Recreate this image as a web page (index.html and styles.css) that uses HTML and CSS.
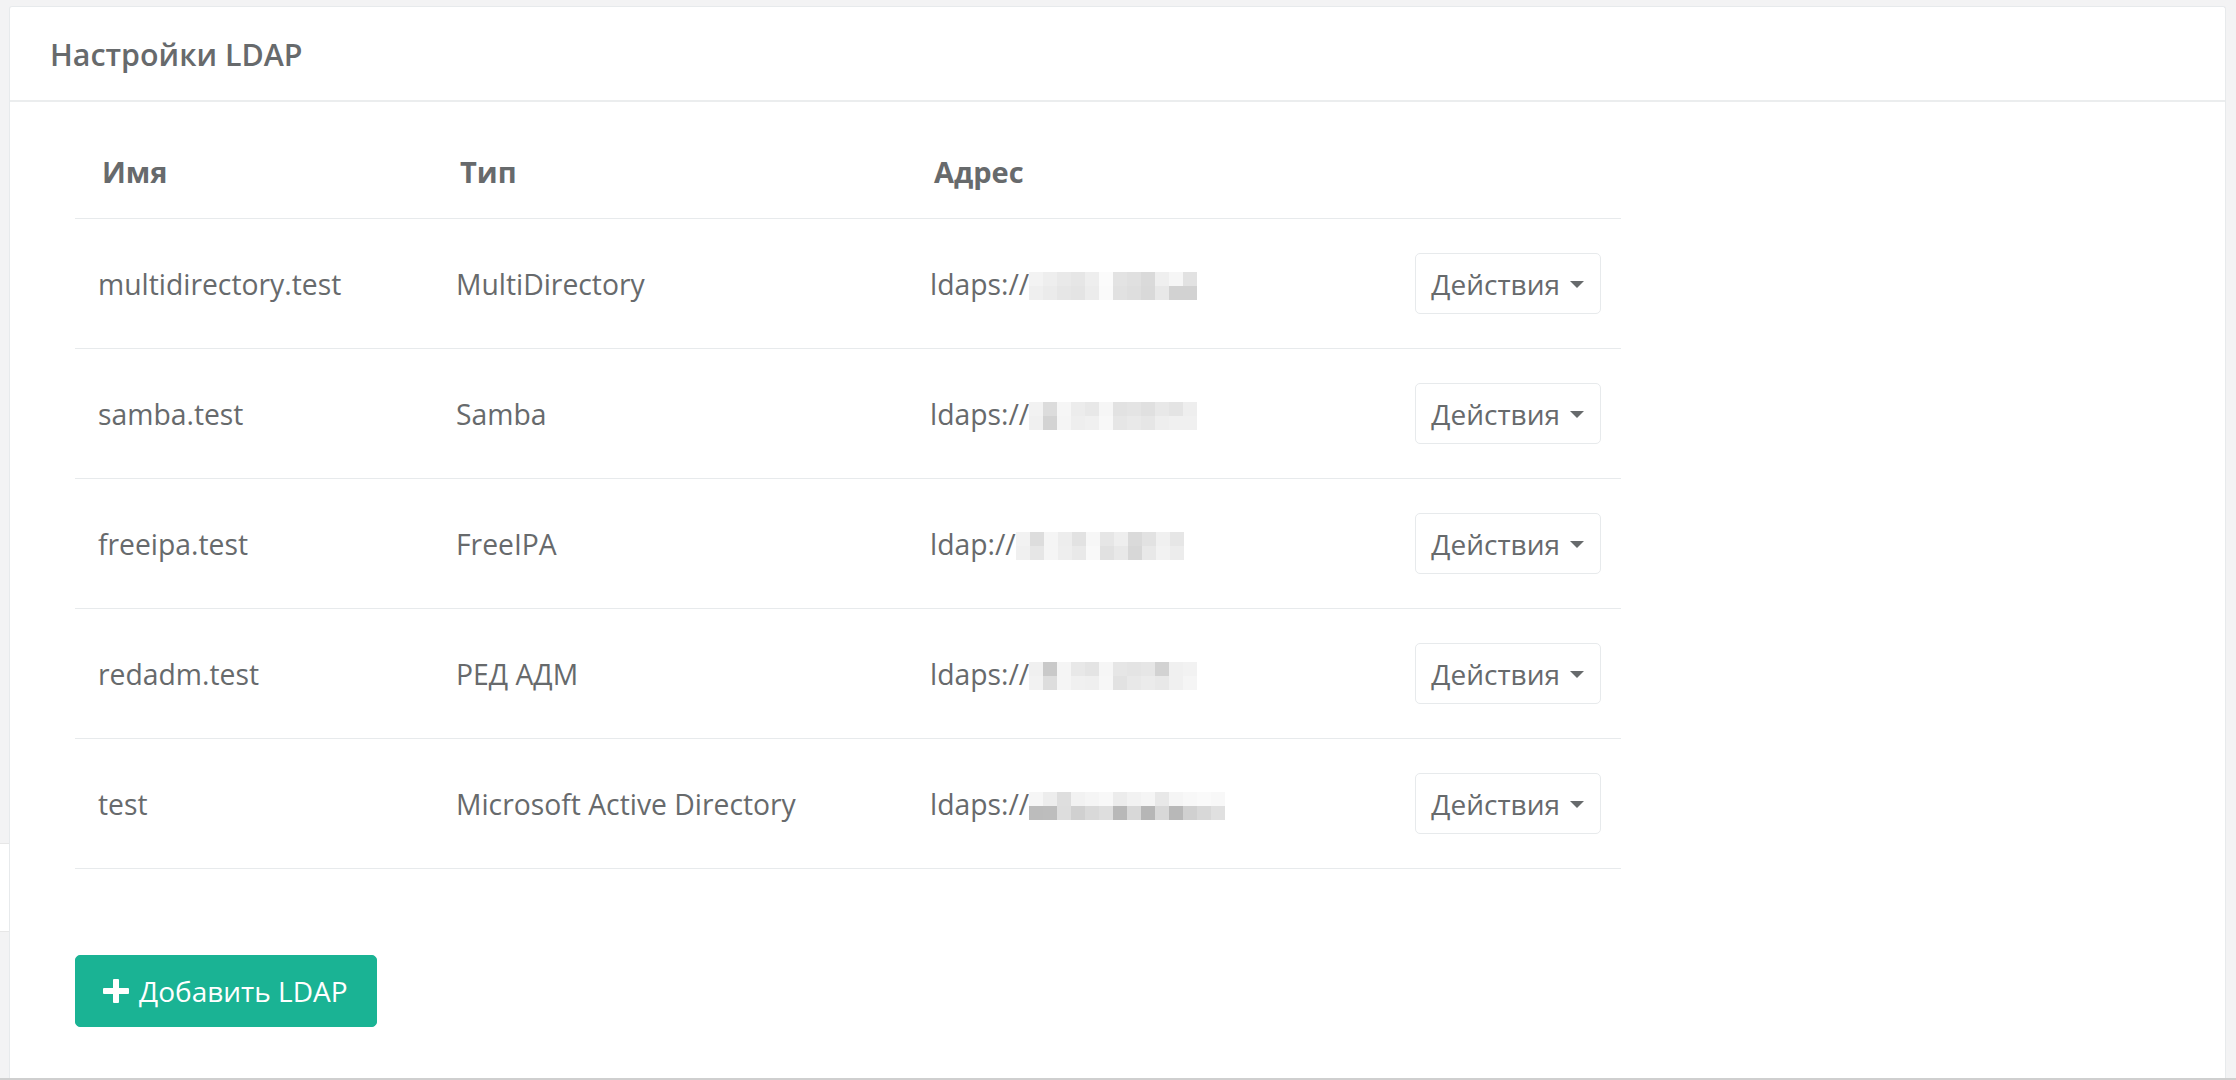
FILE: index.html
```html
<!DOCTYPE html>
<html lang="ru">
<head>
<meta charset="utf-8">
<title>Настройки LDAP</title>
<link rel="stylesheet" href="styles.css">
</head>
<body>
<div class="page">
  <div class="side"><div class="side-block"></div></div>
  <section class="ibox">
    <div class="ibox-title"><h5>Настройки LDAP</h5></div>
    <div class="ibox-content">
      <div class="ldap-table">
        <div class="trow thead">
          <div class="th">Имя</div>
          <div class="th">Тип</div>
          <div class="th">Адрес</div>
          <div class="th"></div>
        </div>

        <div class="trow">
          <div class="td">multidirectory.test</div>
          <div class="td">MultiDirectory</div>
          <div class="td addr">ldaps://<svg class="blur" width="168" height="28" viewBox="0 0 168 28" shape-rendering="crispEdges">
            <rect x="0" y="0" width="14" height="14" fill="#f3f3f3"/><rect x="0" y="14" width="14" height="14" fill="#efefef"/>
            <rect x="14" y="0" width="14" height="14" fill="#eeeeee"/><rect x="14" y="14" width="14" height="14" fill="#ebebeb"/>
            <rect x="28" y="0" width="14" height="14" fill="#e9e9e9"/><rect x="28" y="14" width="14" height="14" fill="#e6e6e6"/>
            <rect x="42" y="0" width="14" height="14" fill="#e6e6e6"/><rect x="42" y="14" width="14" height="14" fill="#e4e4e4"/>
            <rect x="56" y="0" width="14" height="14" fill="#eeeeee"/><rect x="56" y="14" width="14" height="14" fill="#ececec"/>
            <rect x="70" y="0" width="14" height="14" fill="#fbfbfb"/><rect x="70" y="14" width="14" height="14" fill="#fafafa"/>
            <rect x="84" y="0" width="14" height="14" fill="#e3e3e3"/><rect x="84" y="14" width="14" height="14" fill="#e1e1e1"/>
            <rect x="98" y="0" width="14" height="14" fill="#e0e0e0"/><rect x="98" y="14" width="14" height="14" fill="#dedede"/>
            <rect x="112" y="0" width="14" height="14" fill="#dadada"/><rect x="112" y="14" width="14" height="14" fill="#d9d9d9"/>
            <rect x="126" y="0" width="14" height="14" fill="#efefef"/><rect x="126" y="14" width="14" height="14" fill="#e8e8e8"/>
            <rect x="140" y="0" width="14" height="14" fill="#f6f6f6"/><rect x="140" y="14" width="14" height="14" fill="#d2d2d2"/>
            <rect x="154" y="0" width="14" height="14" fill="#e2e2e2"/><rect x="154" y="14" width="14" height="14" fill="#d2d2d2"/>
          </svg></div>
          <div class="td act"><button class="btn-actions" type="button">Действия<span class="caret"></span></button></div>
        </div>

        <div class="trow">
          <div class="td">samba.test</div>
          <div class="td">Samba</div>
          <div class="td addr">ldaps://<svg class="blur" width="168" height="28" viewBox="0 0 168 28" shape-rendering="crispEdges">
            <rect x="0" y="0" width="14" height="14" fill="#f2f2f2"/><rect x="0" y="14" width="14" height="14" fill="#f0f0f0"/>
            <rect x="14" y="0" width="14" height="14" fill="#dcdcdc"/><rect x="14" y="14" width="14" height="14" fill="#d3d3d3"/>
            <rect x="28" y="0" width="14" height="14" fill="#f6f6f6"/><rect x="28" y="14" width="14" height="14" fill="#f5f5f5"/>
            <rect x="42" y="0" width="14" height="14" fill="#ececec"/><rect x="42" y="14" width="14" height="14" fill="#eeeeee"/>
            <rect x="56" y="0" width="14" height="14" fill="#e8e8e8"/><rect x="56" y="14" width="14" height="14" fill="#f0f0f0"/>
            <rect x="70" y="0" width="14" height="14" fill="#f6f6f6"/><rect x="70" y="14" width="14" height="14" fill="#f8f8f8"/>
            <rect x="84" y="0" width="14" height="14" fill="#e2e2e2"/><rect x="84" y="14" width="14" height="14" fill="#e6e6e6"/>
            <rect x="98" y="0" width="14" height="14" fill="#e4e4e4"/><rect x="98" y="14" width="14" height="14" fill="#e9e9e9"/>
            <rect x="112" y="0" width="14" height="14" fill="#e0e0e0"/><rect x="112" y="14" width="14" height="14" fill="#e6e6e6"/>
            <rect x="126" y="0" width="14" height="14" fill="#e8e8e8"/><rect x="126" y="14" width="14" height="14" fill="#eeeeee"/>
            <rect x="140" y="0" width="14" height="14" fill="#e4e4e4"/><rect x="140" y="14" width="14" height="14" fill="#f0f0f0"/>
            <rect x="154" y="0" width="14" height="14" fill="#eeeeee"/><rect x="154" y="14" width="14" height="14" fill="#f0f0f0"/>
          </svg></div>
          <div class="td act"><button class="btn-actions" type="button">Действия<span class="caret"></span></button></div>
        </div>

        <div class="trow">
          <div class="td">freeipa.test</div>
          <div class="td">FreeIPA</div>
          <div class="td addr">ldap://<svg class="blur" width="168" height="28" viewBox="0 0 168 28" shape-rendering="crispEdges">
            <rect x="0" y="0" width="14" height="14" fill="#f2f2f2"/><rect x="0" y="14" width="14" height="14" fill="#f0f0f0"/>
            <rect x="14" y="0" width="14" height="14" fill="#dddddd"/><rect x="14" y="14" width="14" height="14" fill="#e6e6e6"/>
            <rect x="28" y="0" width="14" height="14" fill="#f5f5f5"/><rect x="28" y="14" width="14" height="14" fill="#f5f5f5"/>
            <rect x="42" y="0" width="14" height="14" fill="#ededed"/><rect x="42" y="14" width="14" height="14" fill="#eeeeee"/>
            <rect x="56" y="0" width="14" height="14" fill="#e2e2e2"/><rect x="56" y="14" width="14" height="14" fill="#e9e9e9"/>
            <rect x="70" y="0" width="14" height="14" fill="#f7f7f7"/><rect x="70" y="14" width="14" height="14" fill="#f9f9f9"/>
            <rect x="84" y="0" width="14" height="14" fill="#e6e6e6"/><rect x="84" y="14" width="14" height="14" fill="#e1e1e1"/>
            <rect x="98" y="0" width="14" height="14" fill="#eeeeee"/><rect x="98" y="14" width="14" height="14" fill="#e8e8e8"/>
            <rect x="112" y="0" width="14" height="14" fill="#dadada"/><rect x="112" y="14" width="14" height="14" fill="#d7d7d7"/>
            <rect x="126" y="0" width="14" height="14" fill="#e2e2e2"/><rect x="126" y="14" width="14" height="14" fill="#e8e8e8"/>
            <rect x="140" y="0" width="14" height="14" fill="#f0f0f0"/><rect x="140" y="14" width="14" height="14" fill="#f2f2f2"/>
            <rect x="154" y="0" width="14" height="14" fill="#e6e6e6"/><rect x="154" y="14" width="14" height="14" fill="#ececec"/>
          </svg></div>
          <div class="td act"><button class="btn-actions" type="button">Действия<span class="caret"></span></button></div>
        </div>

        <div class="trow">
          <div class="td">redadm.test</div>
          <div class="td">РЕД АДМ</div>
          <div class="td addr">ldaps://<svg class="blur" width="168" height="28" viewBox="0 0 168 28" shape-rendering="crispEdges">
            <rect x="0" y="0" width="14" height="14" fill="#f0f0f0"/><rect x="0" y="14" width="14" height="14" fill="#f2f2f2"/>
            <rect x="14" y="0" width="14" height="14" fill="#c9c9c9"/><rect x="14" y="14" width="14" height="14" fill="#dddddd"/>
            <rect x="28" y="0" width="14" height="14" fill="#f5f5f5"/><rect x="28" y="14" width="14" height="14" fill="#f5f5f5"/>
            <rect x="42" y="0" width="14" height="14" fill="#e8e8e8"/><rect x="42" y="14" width="14" height="14" fill="#f0f0f0"/>
            <rect x="56" y="0" width="14" height="14" fill="#e4e4e4"/><rect x="56" y="14" width="14" height="14" fill="#efefef"/>
            <rect x="70" y="0" width="14" height="14" fill="#f6f6f6"/><rect x="70" y="14" width="14" height="14" fill="#f7f7f7"/>
            <rect x="84" y="0" width="14" height="14" fill="#e6e6e6"/><rect x="84" y="14" width="14" height="14" fill="#e2e2e2"/>
            <rect x="98" y="0" width="14" height="14" fill="#e4e4e4"/><rect x="98" y="14" width="14" height="14" fill="#e8e8e8"/>
            <rect x="112" y="0" width="14" height="14" fill="#e6e6e6"/><rect x="112" y="14" width="14" height="14" fill="#ebebeb"/>
            <rect x="126" y="0" width="14" height="14" fill="#d2d2d2"/><rect x="126" y="14" width="14" height="14" fill="#e8e8e8"/>
            <rect x="140" y="0" width="14" height="14" fill="#f0f0f0"/><rect x="140" y="14" width="14" height="14" fill="#f0f0f0"/>
            <rect x="154" y="0" width="14" height="14" fill="#f2f2f2"/><rect x="154" y="14" width="14" height="14" fill="#f5f5f5"/>
          </svg></div>
          <div class="td act"><button class="btn-actions" type="button">Действия<span class="caret"></span></button></div>
        </div>

        <div class="trow">
          <div class="td">test</div>
          <div class="td">Microsoft Active Directory</div>
          <div class="td addr">ldaps://<svg class="blur" width="196" height="28" viewBox="0 0 196 28" shape-rendering="crispEdges">
            <rect x="0" y="0" width="14" height="14" fill="#f6f6f6"/><rect x="0" y="14" width="14" height="14" fill="#bcbcbc"/>
            <rect x="14" y="0" width="14" height="14" fill="#ededed"/><rect x="14" y="14" width="14" height="14" fill="#bdbdbd"/>
            <rect x="28" y="0" width="14" height="14" fill="#dedede"/><rect x="28" y="14" width="14" height="14" fill="#dddddd"/>
            <rect x="42" y="0" width="14" height="14" fill="#f2f2f2"/><rect x="42" y="14" width="14" height="14" fill="#d0d0d0"/>
            <rect x="56" y="0" width="14" height="14" fill="#f5f5f5"/><rect x="56" y="14" width="14" height="14" fill="#d9d9d9"/>
            <rect x="70" y="0" width="14" height="14" fill="#f8f8f8"/><rect x="70" y="14" width="14" height="14" fill="#dedede"/>
            <rect x="84" y="0" width="14" height="14" fill="#ececec"/><rect x="84" y="14" width="14" height="14" fill="#b8b8b8"/>
            <rect x="98" y="0" width="14" height="14" fill="#f2f2f2"/><rect x="98" y="14" width="14" height="14" fill="#d8d8d8"/>
            <rect x="112" y="0" width="14" height="14" fill="#f5f5f5"/><rect x="112" y="14" width="14" height="14" fill="#b6b6b6"/>
            <rect x="126" y="0" width="14" height="14" fill="#e8e8e8"/><rect x="126" y="14" width="14" height="14" fill="#d8d8d8"/>
            <rect x="140" y="0" width="14" height="14" fill="#f5f5f5"/><rect x="140" y="14" width="14" height="14" fill="#b8b8b8"/>
            <rect x="154" y="0" width="14" height="14" fill="#f8f8f8"/><rect x="154" y="14" width="14" height="14" fill="#d0d0d0"/>
            <rect x="168" y="0" width="14" height="14" fill="#fafafa"/><rect x="168" y="14" width="14" height="14" fill="#d8d8d8"/>
            <rect x="182" y="0" width="14" height="14" fill="#f8f8f8"/><rect x="182" y="14" width="14" height="14" fill="#e0e0e0"/>
          </svg></div>
          <div class="td act"><button class="btn-actions" type="button">Действия<span class="caret"></span></button></div>
        </div>
      </div>

      <button class="btn-add" type="button">
        <svg class="plus" width="26" height="24" viewBox="0 0 26 24"><rect x="0" y="9" width="26" height="6" rx="1" fill="#fff"/><rect x="10" y="0" width="6" height="24" rx="1" fill="#fff"/></svg>
        <span>Добавить LDAP</span>
      </button>
    </div>
  </section>
</div>
<div class="footer"></div>
</body>
</html>
```

FILE: styles.css
```css
html, body {
  margin: 0;
  padding: 0;
  overflow: hidden;
}

body {
  background: #f3f3f4;
  font-family: "Open Sans", "Noto Sans", "Liberation Sans", sans-serif;
  color: #676a6c;
  width: 2236px;
  height: 1080px;
}

.page {
  display: flex;
  height: 1078px;
  padding-top: 6px;
  box-sizing: border-box;
}

.side {
  width: 9px;
  flex: none;
}

.side-block {
  margin-top: 837px;
  height: 87px;
  background: #ffffff;
  border-top: 1px solid #e7e7e7;
  border-bottom: 1px solid #e7e7e7;
}

.ibox {
  width: 2217px;
  flex: none;
  box-sizing: border-box;
  background: #ffffff;
  border: 1px solid #e7eaec;
  border-bottom: none;
  border-radius: 3px 3px 0 0;
}

.ibox-title {
  padding: 28px 40px 25px;
  border-bottom: 2px solid #ebedee;
}

.ibox-title h5 {
  margin: 0;
  font-size: 30.4px;
  line-height: 40px;
  font-weight: 600;
  color: #676a6c;
}

.ibox-content {
  padding: 30px 0 0 65px;
}

.ldap-table {
  width: 1546px;
}

.trow {
  display: grid;
  grid-template-columns: 358px 474px 1fr auto;
  align-items: center;
  box-sizing: border-box;
  border-bottom: 1px solid #e7eaec;
  font-size: 28.3px;
  line-height: 40px;
}

.thead {
  padding: 20px 0 26px;
  font-size: 29px;
}

.th {
  padding-left: 27px;
  font-weight: 700;
  color: #676a6c;
}

.trow:not(.thead) {
  height: 130px;
}

.td {
  padding-left: 23px;
  white-space: nowrap;
}

.addr {
  display: flex;
  align-items: center;
}

.blur {
  display: block;
  margin-top: 4px;
}

.act {
  padding-right: 20px;
}

.btn-actions {
  display: inline-flex;
  align-items: center;
  gap: 10px;
  height: 61px;
  padding: 0 16px 0 15px;
  background: #ffffff;
  border: 1px solid #e7eaec;
  border-radius: 5px;
  font-family: inherit;
  font-size: 28px;
  color: #676a6c;
  cursor: pointer;
}

.caret {
  width: 0;
  height: 0;
  border-left: 7px solid transparent;
  border-right: 7px solid transparent;
  border-top: 7px solid #676a6c;
  margin-top: 2px;
}

.btn-add {
  margin-top: 86px;
  display: inline-flex;
  align-items: center;
  gap: 10px;
  height: 72px;
  width: 302px;
  padding: 0 0 0 27px;
  box-sizing: border-box;
  background: #1ab394;
  border: 1px solid #1ab394;
  border-radius: 5px;
  color: #ffffff;
  font-family: inherit;
  font-size: 28px;
  cursor: pointer;
}

.plus {
  display: block;
  flex: none;
}

.footer {
  height: 2px;
  background: #cfcfcf;
}
```
